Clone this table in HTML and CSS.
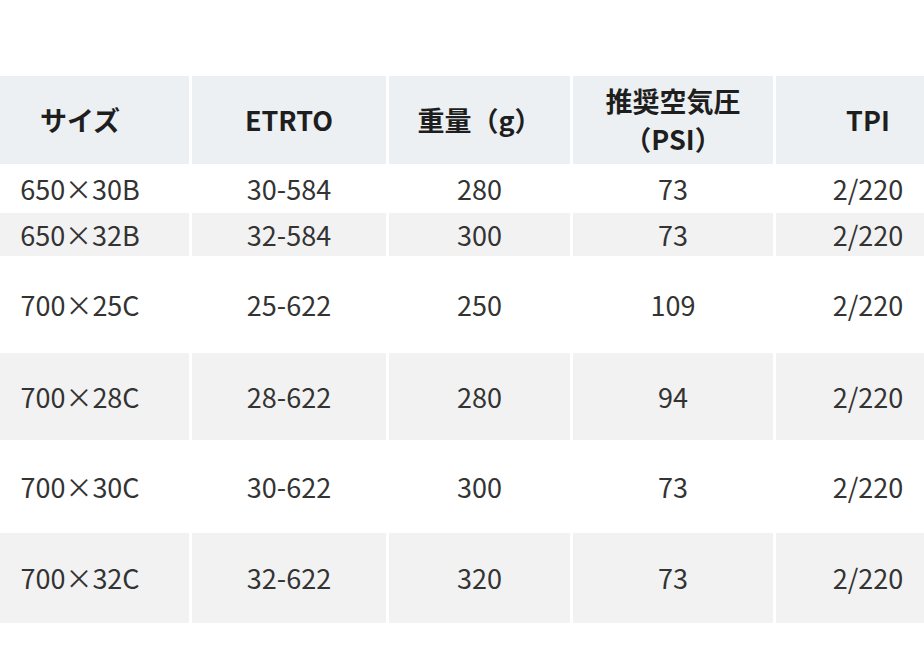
FILE: index.html
```html
<!DOCTYPE html>
<html lang="ja">
<head>
<meta charset="utf-8">
<title>タイヤ仕様</title>
<link rel="stylesheet" href="styles.css">
</head>
<body>
<div class="wrap">
  <table class="spec">
    <colgroup>
      <col class="c1"><col class="c2"><col class="c3"><col class="c4"><col class="c5">
    </colgroup>
    <thead>
      <tr class="head">
        <th>サイズ</th>
        <th>ETRTO</th>
        <th>重量（g）</th>
        <th>推奨空気圧<br>（PSI）</th>
        <th>TPI</th>
      </tr>
    </thead>
    <tbody>
      <tr class="r1">
        <td>650×30B</td><td>30-584</td><td>280</td><td>73</td><td>2/220</td>
      </tr>
      <tr class="r2 alt">
        <td>650×32B</td><td>32-584</td><td>300</td><td>73</td><td>2/220</td>
      </tr>
      <tr class="r3">
        <td>700×25C</td><td>25-622</td><td>250</td><td>109</td><td>2/220</td>
      </tr>
      <tr class="r4 alt">
        <td>700×28C</td><td>28-622</td><td>280</td><td>94</td><td>2/220</td>
      </tr>
      <tr class="r5">
        <td>700×30C</td><td>30-622</td><td>300</td><td>73</td><td>2/220</td>
      </tr>
      <tr class="r6 alt">
        <td>700×32C</td><td>32-622</td><td>320</td><td>73</td><td>2/220</td>
      </tr>
    </tbody>
  </table>
</div>
</body>
</html>
```

FILE: styles.css
```css
html, body {
  margin: 0;
  padding: 0;
  background: #ffffff;
}

.wrap {
  width: 924px;
  height: 660px;
  overflow: hidden;
  padding-top: 76px;
  box-sizing: border-box;
}

.spec {
  margin-left: -29px;
  border-collapse: separate;
  border-spacing: 0;
  table-layout: fixed;
  width: 989px;
  font-family: "Noto Sans CJK JP", "Noto Sans", sans-serif;
  color: #333333;
}

.c1 { width: 218px; }
.c2 { width: 197px; }
.c3 { width: 184px; }
.c4 { width: 203px; }
.c5 { width: 187px; }

.spec th,
.spec td {
  padding: 0;
  text-align: center;
  vertical-align: middle;
  box-sizing: border-box;
}

.spec th + th,
.spec td + td {
  border-left: 3px solid #ffffff;
}

.spec th {
  background: #ecf0f2;
  font-weight: 700;
  font-size: 27px;
  line-height: 38px;
  color: #1e1e1e;
}

.spec td {
  font-size: 27px;
  line-height: 30px;
  font-weight: 400;
}

.head { height: 88px; }
.r1 { height: 49px; }
.r2 { height: 43px; }
.r3 { height: 97px; }
.r4 { height: 87px; }
.r5 { height: 93px; }
.r6 { height: 90px; }

.alt td {
  background: #f2f2f2;
}
```
